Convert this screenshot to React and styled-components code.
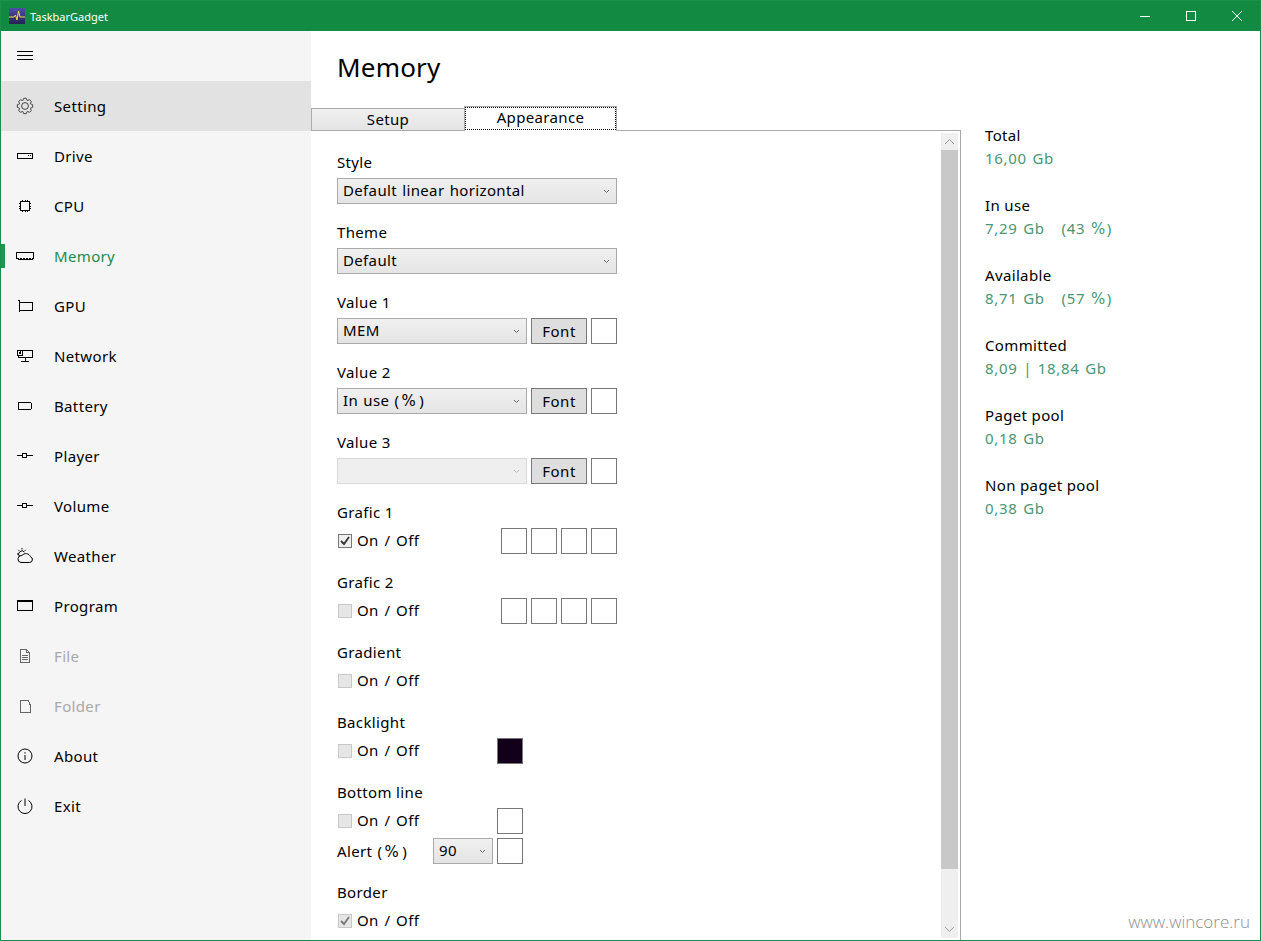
import React from 'react';
import styled, { createGlobalStyle } from 'styled-components';

const Global = createGlobalStyle`
  html, body { margin: 0; padding: 0; background: #fff; }
  body { font-family: "Noto Sans", "DejaVu Sans", sans-serif; color: #000; }
  * { box-sizing: border-box; }
`;
const Win = styled.div`
  position: relative; width: 1261px; height: 941px; border: 1px solid #1a8f4c; border-top: 0;
  display: flex; flex-direction: column; overflow: hidden; background: #fff;
`;
const TitleBar = styled.div`
  height: 31px; flex: none; margin: 0 -1px; background: #128a42; border-top: 1px solid #1d914e; color: #fff;
  display: flex; align-items: center; font-size: 11px; padding-left: 9px;
`;
const AppName = styled.span`margin-left: 5px;`;
const WinButtons = styled.div`margin-left: auto; margin-right: 1px; display: flex;`;
const WinButton = styled.div`width: 46px; height: 30px; display: flex; align-items: center; justify-content: center;`;
const Body = styled.div`flex: 1; display: flex; min-height: 0;`;
const Sidebar = styled.nav`width: 310px; flex: none; background: #f5f5f5;`;
const Burger = styled.div`height: 50px; padding-left: 16px; display: flex; align-items: center;`;
const Item = styled.div`
  position: relative; height: 50px; display: flex; align-items: center; padding: 0 0 1px 16px;
  font-size: 15px; letter-spacing: .35px;
  background: ${p => (p.$hover ? '#e2e2e2' : 'transparent')};
  color: ${p => (p.$active ? '#1d8a4e' : p.$disabled ? '#a8a8a8' : '#000')};
`;
const Marker = styled.span`position: absolute; left: 0; top: 13px; width: 4px; height: 24px; background: #1d9650;`;
const IconBox = styled.span`width: 16px; height: 16px; display: block; flex: none; margin: 1px 21px 0 0;
  svg { display: block; overflow: visible; }`;
const Content = styled.main`flex: 1; min-width: 0; display: flex; flex-direction: column;`;
const Heading = styled.h1`margin: 0; height: 75px; padding: 16px 0 0 26px; font-size: 26px; line-height: 40px; font-weight: 400; letter-spacing: .2px;`;
const Columns = styled.div`flex: 1; min-height: 0; display: flex;`;
const LeftCol = styled.div`width: 650px; flex: none; display: flex; flex-direction: column;`;
const Tabs = styled.div`height: 25px; flex: none; display: flex; align-items: flex-end; position: relative; z-index: 1;`;
const Tab = styled.div`
  border: 1px solid #aaa; font-size: 15px; letter-spacing: .35px; text-align: center;
  ${p => p.$active ? `
    width: 153px; height: 25px; background: #fff; border-bottom: 0; padding: 0; margin-left: -1px;
    span { display: block; height: 23px; border: 1px dotted #000; line-height: 18px; }
  ` : `
    width: 154px; height: 23px; line-height: 20px; background: linear-gradient(#f0f0f0, #e4e4e4);
  `}
`;
const Panel = styled.div`flex: 1; min-height: 0; display: flex; border-top: 1px solid #aaa; border-right: 1px solid #aaa; margin-top: -1px; overflow: hidden;`;
const Form = styled.div`flex: 1; min-width: 0; padding: 21px 0 0 26px;`;
const Group = styled.section`padding-bottom: 18px; width: 280px;`;
const Label = styled.div`height: 26px; line-height: 20px; font-size: 15px; letter-spacing: .35px;`;
const Row = styled.div`display: flex; align-items: center; height: 26px; gap: 4px; & + & { margin-top: 4px; }`;
const Select = styled.div`
  width: ${p => p.$w}px; height: 26px; flex: none; display: flex; align-items: center; justify-content: space-between;
  padding: 0 6px 3px 5px; font-size: 15px; letter-spacing: .35px; word-spacing: 1px;
  border: 1px solid ${p => (p.$off ? '#d9d9d9' : '#aaa')};
  background: ${p => (p.$off ? '#efefef' : 'linear-gradient(#f0f0f0, #e4e4e4)')};
  svg { margin-top: 3px; }
`;
const FontButton = styled.div`
  width: 56px; height: 26px; flex: none; border: 1px solid #777; background: #dedede; text-align: center;
  line-height: 25px; font-size: 15px; letter-spacing: .55px;
`;
const Swatch = styled.div`width: 26px; height: 26px; flex: none; border: 1px solid #777; background: ${p => p.$c || '#fff'};`;
const Check = styled.label`display: flex; align-items: center; font-size: 15px; letter-spacing: .35px; word-spacing: 1.5px; margin-left: 1px; padding-bottom: 2px; width: ${p => p.$w}px; flex: none;`;
const Box = styled.span`
  width: 14px; height: 14px; margin: 2px 5px 0 0; flex: none; display: flex; align-items: center; justify-content: center;
  border: 1px solid ${p => (p.$on ? '#777' : '#c8c8c8')}; background: ${p => (p.$on ? '#efefef' : '#e6e6e6')};
`;
const FieldName = styled.span`width: 92px; flex: none; font-size: 15px; letter-spacing: .35px; word-spacing: 1px;`;
const Pct = styled.span`font-family: "DejaVu Sans", sans-serif; letter-spacing: 1.5px; padding: 0 ${p => (p.$wide ? 2 : 0)}px;`;
const Scrollbar = styled.div`width: 17px; flex: none; margin: 2px 2px 2px 0; background: #efefef; display: flex; flex-direction: column;`;
const ScrollEnd = styled.div`height: 17px; flex: none; display: flex; align-items: center; justify-content: center;`;
const Thumb = styled.div`height: 719px; background: #c8c8c8;`;
const ScrollRest = styled.div`flex: 1;`;
const Stats = styled.aside`padding: 18px 0 0 24px;`;
const Stat = styled.div`height: 70px; font-size: 15px; letter-spacing: .35px; line-height: 23px;`;
const StatValue = styled.div`color: #4a9674; white-space: pre; letter-spacing: .7px; word-spacing: 1px;`;
const Watermark = styled.div`position: absolute; right: 10px; bottom: 7px; font-size: 17px; font-weight: 300; color: #8f8f8f; font-family: "Open Sans", sans-serif;`;

const S = p => <svg width="16" height="16" viewBox="0 0 16 16" fill="none" stroke={p.c || '#000'} strokeWidth="1" shapeRendering={p.smooth ? 'auto' : 'crispEdges'}>{p.children}</svg>;

const gearPath = (() => {
  const pts = [];
  for (let i = 0; i < 8; i++) {
    const a = (i * Math.PI) / 4 - Math.PI / 2;
    const at = (r, d) => `${(8 + r * Math.cos(a + d)).toFixed(2)} ${(8 + r * Math.sin(a + d)).toFixed(2)}`;
    pts.push(at(5.9, -0.38), at(7.8, -0.16), at(7.8, 0.16), at(5.9, 0.38));
  }
  return 'M' + pts.join('L') + 'Z';
})();

const icons = {
  gear: <S smooth c="#444"><path d={gearPath} /><circle cx="8" cy="8" r="3.4" /></S>,
  drive: <S><rect x=".5" y="5.5" width="15" height="5" /><path d="M11 7.5h1M13 7.5h1" /></S>,
  cpu: <S><rect x="3.5" y="3.5" width="9" height="9" /><path d="M5 2.5h1M7.5 2.5h1M10 2.5h1M5 13.5h1M7.5 13.5h1M10 13.5h1M2.5 5v1M2.5 7.5v1M2.5 10v1M13.5 5v1M13.5 7.5v1M13.5 10v1" /></S>,
  mem: <S><path d="M-.5 4.5h16.5v6h-1v1h-2v-1h-1v1h-2v-1h-1v1h-2v-1h-1v1h-2v-1h-1v1h-2v-1h-1.5z" /></S>,
  gpu: <S><path d="M.5 2.5h2v11.5M2.5 4.5h13v8h-13" /></S>,
  net: <S><path d="M5.5 2.5h10v7h-14v-2" /><rect x=".5" y="2.5" width="5" height="5" /><path d="M8 9.5v4M4 13.5h8M2 4.5l1 1l1-2" /></S>,
  batt: <S><path d="M1.5 4.5h12l1 1v5l-1 1h-12z" /></S>,
  slider: <S><path d="M0 7.5h5M10 7.5h6" /><rect x="5.5" y="5.5" width="4" height="4" /></S>,
  weather: <S smooth><path d="M4 14.5H12.5A3 3 0 0 0 13.5 8.7A5 5 0 0 0 5 7.5A3.5 3.5 0 0 0 4 14.5Z" /><path d="M2.5 8.5A3.2 3.2 0 0 1 7.5 4M5 0v1.5M1.2 1.8l1 1M0 6h1.4M8.8 1.8l-1 1" /></S>,
  program: <S><rect x=".5" y="2.5" width="15" height="10" /><path d="M0 3.5h16" /></S>,
  file: <S c="#666"><path d="M3.5 1.5h6l3 3v10h-9zM9.5 1.5v3h3M5 7.5h6M5 9.5h6M5 11.5h6" /></S>,
  folder: <S c="#666"><path d="M3.5 2.5h8l1.5 4v8h-9.5z" /></S>,
  about: <S smooth><circle cx="8" cy="8" r="7" /><path d="M8 7v5M8 4.2v1.4" /></S>,
  exit: <S smooth><path d="M4.5 2.5a7 7 0 1 0 7 0M8 .5V8" /></S>,
};

const navItems = [
  ['Setting', 'gear', { $hover: true }],
  ['Drive', 'drive'], ['CPU', 'cpu'], ['Memory', 'mem', { $active: true }], ['GPU', 'gpu'], ['Network', 'net'],
  ['Battery', 'batt'], ['Player', 'slider'], ['Volume', 'slider'], ['Weather', 'weather'], ['Program', 'program'],
  ['File', 'file', { $disabled: true }], ['Folder', 'folder', { $disabled: true }], ['About', 'about'], ['Exit', 'exit'],
];
const P = <Pct>%</Pct>;
const stats = [
  ['Total', '16,00 Gb'], ['In use', <>7,29 Gb   (43 {P})</>], ['Available', <>8,71 Gb   (57 {P})</>],
  ['Committed', '8,09 | 18,84 Gb'], ['Paget pool', '0,18 Gb'], ['Non paget pool', '0,38 Gb'],
];

const Chevron = ({ c = '#666' }) => <svg width="7" height="5" viewBox="0 0 7 5" fill="none" stroke={c}><path d="M1 1l2.5 2.5L6 1" /></svg>;
const Drop = ({ w, off, children }) => <Select $w={w} $off={off}><span>{children}</span><Chevron c={off ? '#bbb' : '#666'} /></Select>;
const Tick = ({ c }) => <svg width="12" height="12" viewBox="0 0 12 12" fill="none" stroke={c} strokeWidth="1.8"><path d="M2 6l3 3 5-7" /></svg>;
const OnOff = ({ on, c, w = 134 }) => <Check $w={w}><Box $on={on}>{c && <Tick c={c} />}</Box>On / Off</Check>;
const ValueRow = ({ name, off, children }) => (
  <Group><Label>{name}</Label><Row><Drop w={190} off={off}>{children}</Drop><FontButton>Font</FontButton><Swatch /></Row></Group>
);

export default function App() {
  return (
    <Win>
      <Global />
      <TitleBar>
        <svg width="16" height="16" viewBox="0 0 16 16">
          <defs><linearGradient id="lg" x1="0" y1="0" x2="0" y2="1"><stop offset="0" stopColor="#4e4fa8" /><stop offset="1" stopColor="#23244f" /></linearGradient></defs>
          <rect width="16" height="16" fill="url(#lg)" />
          <path d="M0 9h5l1.5-2 1.5 5 1.5-9 1.5 6h5" fill="none" stroke="#f0e040" strokeWidth="1" />
        </svg>
        <AppName>TaskbarGadget</AppName>
        <WinButtons>
          <WinButton><svg width="10" height="10" viewBox="0 0 10 10" stroke="#fff" shapeRendering="crispEdges"><path d="M0 5.5h10" /></svg></WinButton>
          <WinButton><svg width="10" height="10" viewBox="0 0 10 10" fill="none" stroke="#fff" shapeRendering="crispEdges"><rect x=".5" y=".5" width="9" height="9" /></svg></WinButton>
          <WinButton><svg width="10" height="10" viewBox="0 0 10 10" stroke="#fff"><path d="M0 0l10 10M10 0L0 10" /></svg></WinButton>
        </WinButtons>
      </TitleBar>
      <Body>
        <Sidebar>
          <Burger><svg width="16" height="16" viewBox="0 0 16 16" stroke="#000" shapeRendering="crispEdges"><path d="M0 3.5h16M0 7.5h16M0 11.5h16" /></svg></Burger>
          {navItems.map(([label, icon, props]) => (
            <Item key={label} {...props}>
              {props?.$active && <Marker />}
              <IconBox>{icons[icon]}</IconBox>{label}
            </Item>
          ))}
        </Sidebar>
        <Content>
          <Heading>Memory</Heading>
          <Columns>
            <LeftCol>
              <Tabs><Tab>Setup</Tab><Tab $active><span>Appearance</span></Tab></Tabs>
              <Panel>
                <Form>
                  <Group><Label>Style</Label><Row><Drop w={280}>Default linear horizontal</Drop></Row></Group>
                  <Group><Label>Theme</Label><Row><Drop w={280}>Default</Drop></Row></Group>
                  <ValueRow name="Value 1">MEM</ValueRow>
                  <ValueRow name="Value 2">In use (<Pct $wide>%</Pct>)</ValueRow>
                  <ValueRow name="Value 3" off />
                  <Group><Label>Grafic 1</Label><Row><OnOff on c="#333" w={159} /><Swatch /><Swatch /><Swatch /><Swatch /></Row></Group>
                  <Group><Label>Grafic 2</Label><Row><OnOff w={159} /><Swatch /><Swatch /><Swatch /><Swatch /></Row></Group>
                  <Group><Label>Gradient</Label><Row><OnOff /></Row></Group>
                  <Group><Label>Backlight</Label><Row><OnOff w={155} /><Swatch $c="#12001a" /></Row></Group>
                  <Group><Label>Bottom line</Label>
                    <Row><OnOff w={155} /><Swatch /></Row>
                    <Row><FieldName>Alert (<Pct $wide>%</Pct>)</FieldName><Drop w={60}>90</Drop><Swatch /></Row>
                  </Group>
                  <Group><Label>Border</Label><Row><OnOff c="#777" /></Row></Group>
                </Form>
                <Scrollbar>
                  <ScrollEnd><svg width="11" height="7" viewBox="0 0 11 7" fill="none" stroke="#999"><path d="M1 6l4.5-4.5L10 6" /></svg></ScrollEnd>
                  <Thumb />
                  <ScrollRest />
                  <ScrollEnd><svg width="11" height="7" viewBox="0 0 11 7" fill="none" stroke="#999"><path d="M1 1l4.5 4.5L10 1" /></svg></ScrollEnd>
                </Scrollbar>
              </Panel>
            </LeftCol>
            <Stats>
              {stats.map(([k, v]) => <Stat key={k}>{k}<StatValue>{v}</StatValue></Stat>)}
            </Stats>
          </Columns>
        </Content>
      </Body>
      <Watermark>www.wincore.ru</Watermark>
    </Win>
  );
}
